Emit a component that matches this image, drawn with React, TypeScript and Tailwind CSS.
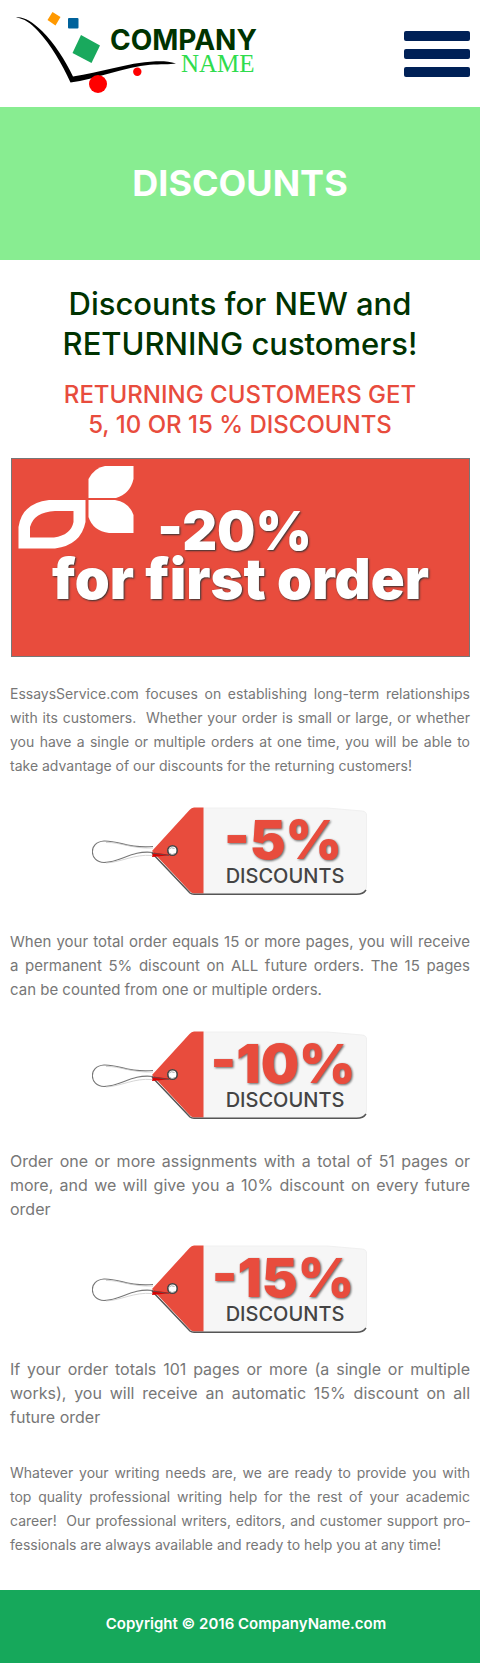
import React from "react";

function Logo() {
  return (
    <svg viewBox="0 0 260 100" className="h-[100px] w-[260px]" role="img" aria-label="Company Name">
      <path d="M16 17.500C22 16 32 21 42 31C55 44 65 60 73 76.500C100 73 125 63 156 61.300C163 61 170 61.500 176 63.500C170 64.500 160 64 150 64.800C125 67 95 79.500 70.500 82.500C62 64 51 45 38 31C31 23 24 18.500 16 17.500Z" fill="#000" />
      <path d="M52.500 12L60.500 17L55.500 25.500L47.500 20Z" fill="#ff9900" />
      <rect x="68" y="18" width="10.500" height="10.500" rx="1" fill="#00629b" />
      <path d="M81 35L100 45.500L91.500 63L72.500 53Z" fill="#19a95d" />
      <circle cx="98" cy="84" r="9" fill="#ff0000" />
      <circle cx="137.300" cy="71.800" r="4.200" fill="#ff0000" />
      <text x="110" y="50" className="fill-[#003300] font-['Inter',sans-serif] text-[28px] font-bold">COMPANY</text>
      <text x="181" y="72" className="fill-[#2fdc4d] font-['Liberation_Serif',serif] text-[25px]">NAME</text>
    </svg>
  );
}

function LeafMark() {
  return (
    <svg viewBox="0 0 116 84" className="absolute top-[6px] left-[6px] h-[84px] w-[116px]" aria-hidden="true">
      <path d="M70.500 14Q76 3 87 1H115.500V14Q112 29 98 33H70.500V14Z" fill="#fff" />
      <path d="M70.500 35H97Q111 37 115.500 50V68H91Q75 66 70.500 52Z" fill="#fff" />
      <path fillRule="evenodd" d="M.5 83.500V62Q4 38 31 35H67.500V57Q63 80 37 83.500ZM12 72.500H36Q53 70 55.500 57V46H37Q16 47 12 62Z" fill="#fff" />
    </svg>
  );
}

function DiscountTag({ value }: { value: string }) {
  return (
    <svg viewBox="0 0 276 90" className="block h-[90px] w-[276px]" role="img" aria-label={`${value} discounts`}>
      <path d="M111 1L235 1L270 4Q274.500 4.500 274.500 8V79Q274.500 86 267 86.300H111Z" fill="#f6f6f6" stroke="#f0f0f0" />
      <path d="M60 44L97.500 3Q99.500 .5 102 .5H111.500V86.500H102Q100 86.500 98 84.500Z" fill="#e84c3d" />
      <path d="M60 46L98 86Q99.500 87.300 102 87.300H264Q271 87.500 274 83" fill="none" stroke="#555" strokeWidth="1.500" />
      <path d="M61 45.500L80 48L60 50Z" fill="#d80000" />
      <path d="M61 39.500C36 42 28 33.500 12 34C-4 35-3 55 12 55.500C30 55 39 43 61 45.500" fill="none" stroke="#777" strokeWidth="1.100" />
      <path d="M61 41C40 42 28 35 14 35.500M14 56C30 55 42 47 60 48.500" fill="none" stroke="#ccc" strokeWidth=".8" />
      <path d="M60 46L77 48.500" stroke="#555" strokeWidth=".8" />
      <circle cx="80.500" cy="43.500" r="4.700" fill="#fff" stroke="#444" strokeWidth="1.600" />
      <path d="M76.500 42.500Q79 39.500 82.500 41.500M77 46Q80 49 83 46.500" fill="none" stroke="#aaa" />
      <text x="191" y="52" textAnchor="middle" className="fill-[#e84c3d] font-['Inter',sans-serif] text-[54px] font-black drop-shadow-[1px_1px_1px_#666]">{value}</text>
      <text x="193" y="76" textAnchor="middle" className="fill-[#444] font-['Inter',sans-serif] text-[20px] font-medium">DISCOUNTS</text>
    </svg>
  );
}

export default function App() {
  return (
    <div className="bg-white font-['Inter',sans-serif] text-[#777]">
      <header className="flex h-[107px] items-start justify-between pr-[10px]">
        <a href="#home"><Logo /></a>
        <button type="button" aria-label="Open menu" className="mt-[31px] flex w-[66px] flex-col gap-2">
          <span className="h-[10px] w-full rounded-[2px] bg-[#002157]" />
          <span className="h-[10px] w-full rounded-[2px] bg-[#002157]" />
          <span className="h-[10px] w-full rounded-[2px] bg-[#002157]" />
        </button>
      </header>
      <section className="flex h-[153px] items-center justify-center bg-[#88ed91] pb-0.5">
        <h1 className="text-4xl font-bold text-white">DISCOUNTS</h1>
      </section>
      <main className="px-[10px] pt-6">
        <h2 className="text-center text-[31px] leading-10 font-medium text-[#003300]">
          Discounts for NEW and<br />RETURNING customers!
        </h2>
        <h3 className="mt-[16px] text-center text-2xl leading-[30px] font-medium text-[#e84c3d]">
          RETURNING CUSTOMERS GET<br />5, 10 OR 15 % DISCOUNTS
        </h3>
        <section className="relative mt-[18px] ml-px flex h-[199px] flex-col items-center border border-[#777] bg-[#e84c3d] pt-[48px] leading-[48px] font-black text-white [text-shadow:1px_1px_2px_#333]">
          <LeafMark />
          <p className="pr-3 text-[54px] leading-[48px]">-20%</p>
          <p className="text-[56px] leading-[48px]">for first order</p>
        </section>
        <p className="mt-[25px] text-justify text-[14px] leading-6">
          EssaysService.com focuses on establishing long-term relationships with its customers.&nbsp; Whether your order is small or large, or whether you have a single or multiple orders at one time, you will be able to take advantage of our discounts for the returning customers!
        </p>
        <div className="mt-[29px] flex justify-center pr-5"><DiscountTag value="-5%" /></div>
        <p className="mt-[33px] text-justify text-[15px] leading-6">
          When your total order equals 15 or more pages, you will receive a permanent 5% discount on ALL future orders. The 15 pages can be counted from one or multiple orders.
        </p>
        <div className="mt-[29px] flex justify-center pr-5"><DiscountTag value="-10%" /></div>
        <p className="mt-[28px] text-justify text-[16px] leading-6">
          Order one or more assignments with a total of 51 pages or more, and we will give you a 10% discount on every future order
        </p>
        <div className="mt-6 flex justify-center pr-5"><DiscountTag value="-15%" /></div>
        <p className="mt-[22px] text-justify text-[16px] leading-6">
          If your order totals 101 pages or more (a single or multiple works), you will receive an automatic 15% discount on all future order
        </p>
        <p className="mt-[32px] text-justify text-[14px] leading-6">
          Whatever your writing needs are, we are ready to provide you with top quality professional writing help for the rest of your academic career!&nbsp; Our professional writers, editors, and customer support pro&shy;fessionals are always available and ready to help you at any time!
        </p>
      </main>
      <footer className="mt-[33px] flex h-[73px] items-center justify-center bg-[#16a85b] pb-1 pl-3 text-[15px] font-semibold text-white">
        Copyright © 2016 CompanyName.com
      </footer>
    </div>
  );
}
